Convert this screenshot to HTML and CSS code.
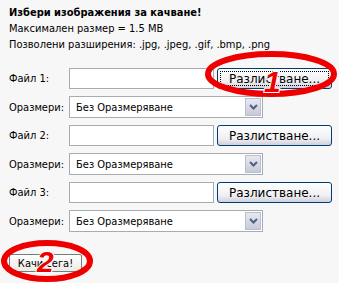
FILE: index.html
```html
<!DOCTYPE html>
<html>
<head>
    <title>Качване на изображения</title>
    <link rel="stylesheet" href="styles.css">
</head>
<body>
    <div class="page">
        <div class="intro">
            <h1>Избери изображения за качване!</h1>
            <p>Максимален размер = 1.5 MB</p>
            <p>Позволени разширения: .jpg, .jpeg, .gif, .bmp, .png</p>
        </div>

        <div class="upload-form">
            <label for="file1">Файл 1:</label>
            <div class="file-row">
                <input type="text" id="file1">
                <button class="browse focused">Разлистване...</button>
            </div>
            <label for="size1">Оразмери:</label>
            <div class="select-box">
                <select id="size1"><option>Без Оразмеряване</option></select>
                <span class="arrow"><svg width="9" height="6" viewBox="0 0 9 6"><path d="M1 1 L4.5 4.5 L8 1" fill="none" stroke="#4d6185" stroke-width="2"/></svg></span>
            </div>

            <label for="file2">Файл 2:</label>
            <div class="file-row">
                <input type="text" id="file2">
                <button class="browse">Разлистване...</button>
            </div>
            <label for="size2">Оразмери:</label>
            <div class="select-box">
                <select id="size2"><option>Без Оразмеряване</option></select>
                <span class="arrow"><svg width="9" height="6" viewBox="0 0 9 6"><path d="M1 1 L4.5 4.5 L8 1" fill="none" stroke="#4d6185" stroke-width="2"/></svg></span>
            </div>

            <label for="file3">Файл 3:</label>
            <div class="file-row">
                <input type="text" id="file3">
                <button class="browse">Разлистване...</button>
            </div>
            <label for="size3">Оразмери:</label>
            <div class="select-box">
                <select id="size3"><option>Без Оразмеряване</option></select>
                <span class="arrow"><svg width="9" height="6" viewBox="0 0 9 6"><path d="M1 1 L4.5 4.5 L8 1" fill="none" stroke="#4d6185" stroke-width="2"/></svg></span>
            </div>
        </div>

        <button class="submit">Качи сега!</button>

        <!-- annotation marks drawn over the form -->
        <svg class="marks" width="339" height="283" viewBox="0 0 339 283">
            <ellipse cx="271" cy="74" rx="63" ry="20" fill="none" stroke="#ee0000" stroke-width="6"/>
            <ellipse cx="47" cy="261" rx="43" ry="18" fill="none" stroke="#ee0000" stroke-width="6"/>
            <text x="264" y="92" class="num">1</text>
            <text x="37" y="272" class="num">2</text>
        </svg>
    </div>
</body>
</html>
```

FILE: styles.css
```css
body {
    margin: 0;
    background-color: #f7f7f7;
    font-family: "DejaVu Sans Condensed", "DejaVu Sans", sans-serif;
    font-size: 11px;
    color: #000;
}
.page {
    position: relative;
    width: 339px;
    height: 283px;
    padding: 5px 9px 0;
    box-sizing: border-box;
    overflow: hidden;
}
.intro h1 {
    margin: 0;
    font-size: 11px;
    font-weight: bold;
    line-height: 16px;
}
.intro p {
    margin: 0;
    line-height: 16px;
}
.upload-form {
    display: grid;
    grid-template-columns: 60px auto;
    align-items: center;
    row-gap: 7px;
    margin-top: 15px;
}
.file-row {
    display: flex;
    align-items: center;
    gap: 3px;
}
.file-row input {
    width: 145px;
    height: 21px;
    box-sizing: border-box;
    border: 1px solid #a5acb2;
    background: #fff;
    margin: 0;
}
.browse {
    width: 115px;
    height: 21px;
    padding: 0;
    font-family: "DejaVu Sans", sans-serif;
    font-size: 12px;
    color: #000;
    border: 1px solid #003c74;
    border-radius: 3px;
    background: linear-gradient(#ffffff, #f0f0f4 65%, #cfd0dc);
}
.browse.focused {
    outline: 1px dotted #000;
    outline-offset: -4px;
}
.select-box {
    display: flex;
    width: 194px;
    height: 22px;
    box-sizing: border-box;
    border: 1px solid #a5acb2;
    background: #fff;
    padding: 1px;
}
.select-box select {
    flex: 1;
    appearance: none;
    border: none;
    background: transparent;
    font-family: "DejaVu Sans Condensed", "DejaVu Sans", sans-serif;
    font-size: 11px;
    padding: 0 5px;
    color: #000;
}
.arrow {
    width: 16px;
    display: flex;
    align-items: center;
    justify-content: center;
    border: 1px solid #b8c0d0;
    background: linear-gradient(#e8e8f0, #c8cad8);
    box-sizing: border-box;
}
.submit {
    margin-top: 22px;
    width: 73px;
    height: 18px;
    padding: 0;
    font-family: "DejaVu Sans Condensed", "DejaVu Sans", sans-serif;
    font-size: 11px;
    color: #000;
    border: 1px solid #7a7a7a;
    border-radius: 2px;
    background: linear-gradient(#ffffff, #ecebe6);
}
.marks {
    position: absolute;
    left: 0;
    top: 0;
    pointer-events: none;
}
.num {
    font-family: "Liberation Sans", Arial, sans-serif;
    font-size: 30px;
    font-weight: bold;
    font-style: italic;
    fill: #ee0000;
    stroke: #fff;
    stroke-width: 2px;
    paint-order: stroke;
}
```
